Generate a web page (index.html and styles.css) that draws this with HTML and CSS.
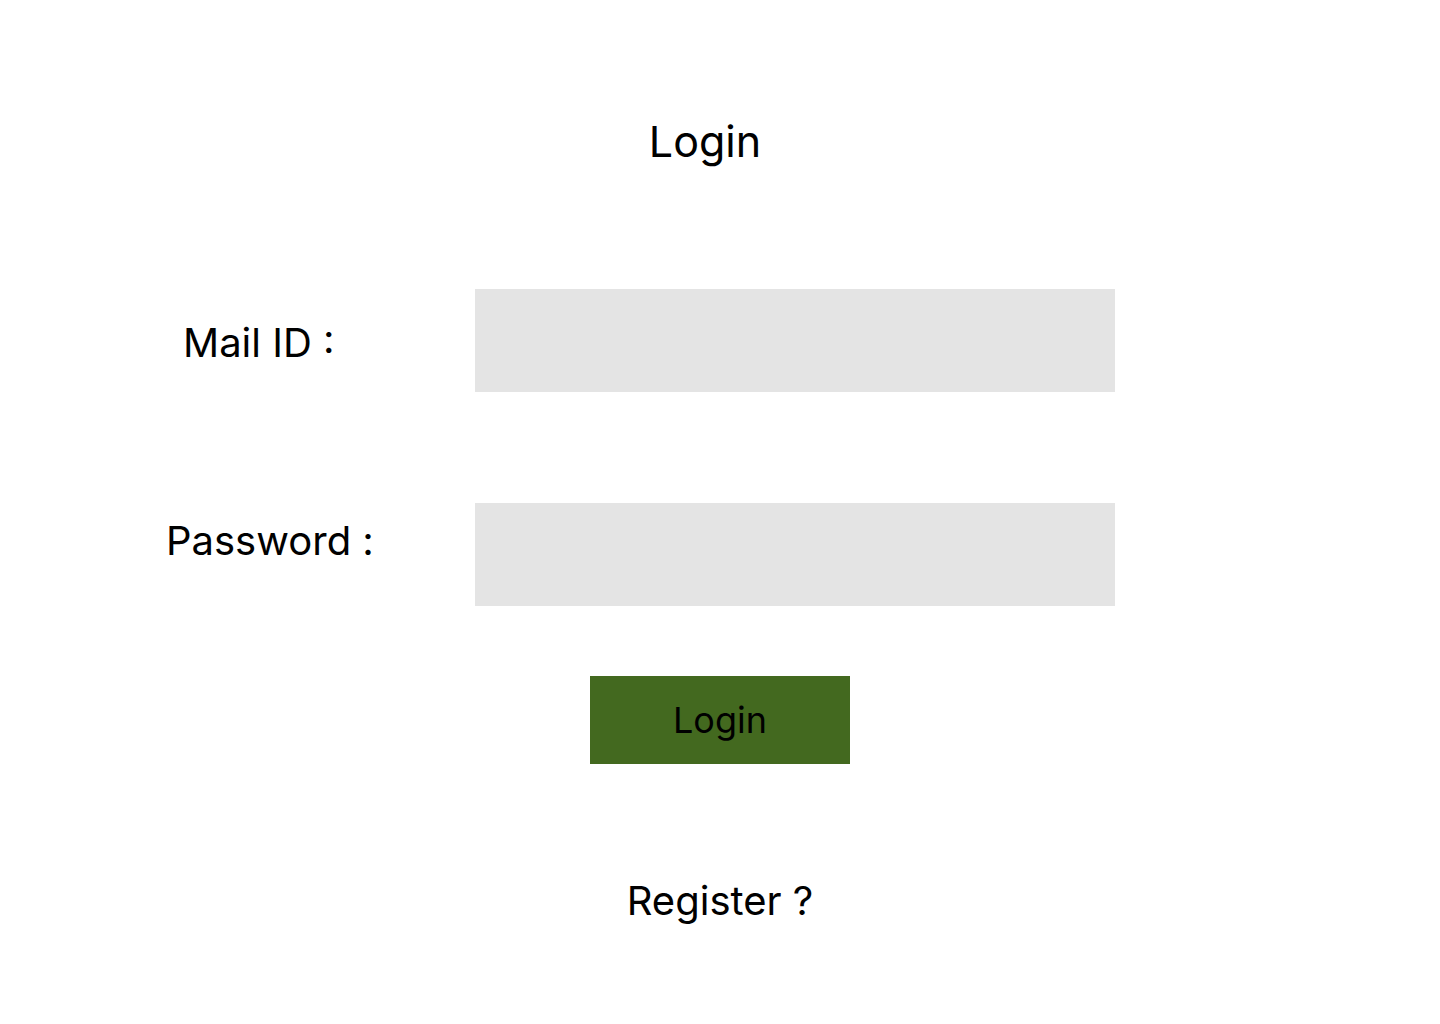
FILE: index.html
```html
<!DOCTYPE html>
<html lang="en">
<head>
<meta charset="utf-8">
<title>Login</title>
<link rel="stylesheet" href="styles.css">
</head>
<body>
<main class="page">
  <h1 class="title">Login</h1>
  <form class="form">
    <div class="form-row">
      <label class="label label--mail" for="mail">Mail ID :</label>
      <input class="field" id="mail" type="email">
    </div>
    <div class="form-row form-row--pass">
      <label class="label label--pass" for="pass">Password :</label>
      <input class="field" id="pass" type="password">
    </div>
    <button class="btn" type="button">Login</button>
  </form>
  <p class="register">Register ?</p>
</main>
</body>
</html>
```
FILE: styles.css
```css
html, body {
  margin: 0;
  padding: 0;
  background: #ffffff;
}
body {
  font-family: Inter, "Noto Sans", sans-serif;
  color: #000000;
}
.page {
  display: flex;
  flex-direction: column;
  padding-top: 120px;
  padding-bottom: 80px;
}
.title {
  margin: 0 0 126px;
  padding-right: 30px;
  font-size: 43px;
  line-height: 1;
  font-weight: 400;
  text-align: center;
}
.form {
  display: flex;
  flex-direction: column;
}
.form-row {
  display: flex;
  align-items: center;
}
.form-row--pass {
  margin-top: 111px;
}
.label {
  width: 475px;
  box-sizing: border-box;
  font-size: 40px;
  line-height: 1;
}
.label--mail {
  padding-left: 183px;
  margin-top: 4px;
}
.label--pass {
  padding-left: 166px;
  align-self: flex-start;
  margin-top: 18px;
}
.field {
  width: 640px;
  height: 103px;
  box-sizing: border-box;
  border: 0;
  margin: 0;
  padding: 0 16px;
  background: #e4e4e4;
  font: inherit;
  font-size: 28px;
}
.btn {
  align-self: flex-start;
  margin: 70px 0 0 590px;
  width: 260px;
  height: 88px;
  border: 0;
  padding: 0;
  background: #43691f;
  color: #000000;
  font-family: inherit;
  font-size: 36px;
  line-height: 1;
}
.register {
  margin: 112px 0 0;
  font-size: 40px;
  line-height: 1.25;
  text-align: center;
}
```
